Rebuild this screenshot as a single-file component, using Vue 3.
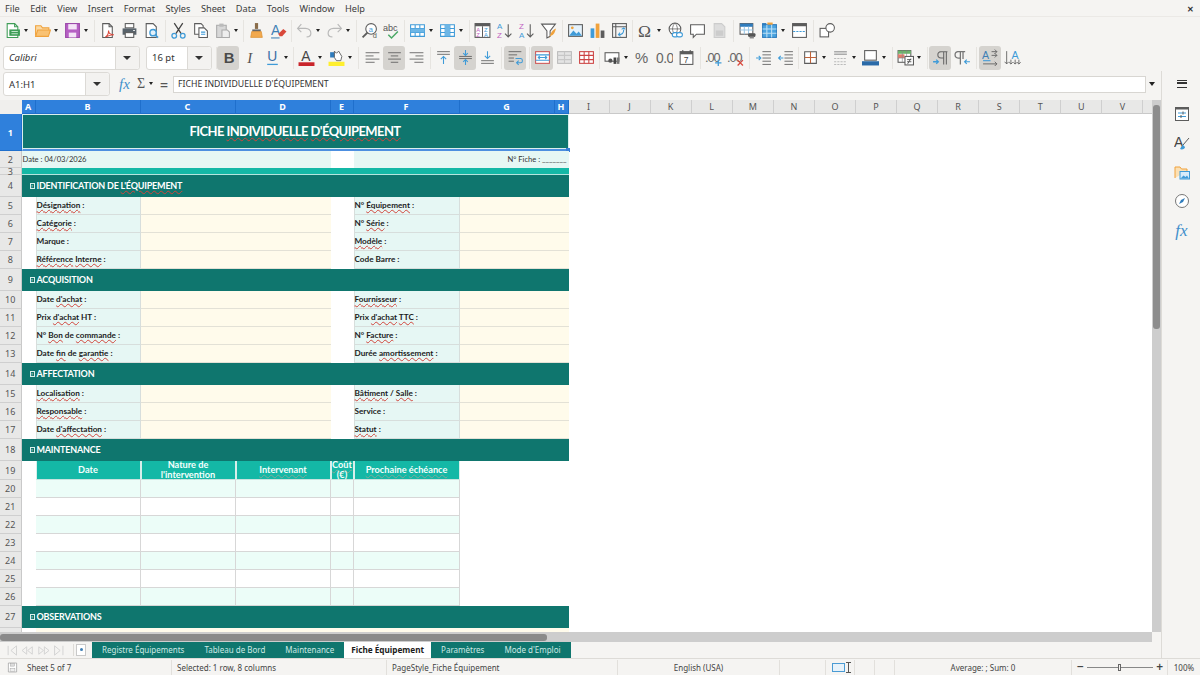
<script setup>
const B = '#3f9bd8', D = '#5c5c5c', O = '#f0a23c', R = '#d9483b', L = '#b9b9b9'
const gridLines = (c = B) => `<path d="M1.5 2.5h13v11h-13zM1.5 6.2h13M1.5 9.8h13M5.8 2.5v11M10.2 2.5v11" fill="#fff" stroke="${c}"/>`

const icons = {
  new: `<path d="M3 1.5h7l3 3v10H3z" fill="#fff" stroke="#3f9d57"/><path d="M10 1.5v3h3" fill="none" stroke="#3f9d57"/><rect x="5" y="7" width="10" height="6" fill="#3f9d57"/><path d="M7 9h6M7 11h6" stroke="#bfe5c9"/>`,
  open: `<path d="M1.5 13V3.5h5l1.5 2h6V8" fill="#fbd9a3" stroke="${O}"/><path d="M1.5 13.5l2-6h12l-2 6z" fill="#f9c273" stroke="${O}"/>`,
  save: `<path d="M1.5 1.5h13v13h-13z" fill="#b65fc4" stroke="#9d4bab"/><rect x="4" y="2" width="8" height="5" fill="#f4e4f7"/><rect x="4.5" y="10" width="7" height="4.5" fill="#f4e4f7"/>`,
  pdf: `<path d="M3.5 1.5h6l3 3v10h-9z" fill="#fff" stroke="${D}"/><path d="M9.5 1.5v3h3" fill="none" stroke="${D}"/><path d="M6 14c2-1 3-4 3-6 0 3 2 4 5 4-3 0-5 1-8 2z" fill="none" stroke="${R}"/>`,
  print: `<rect x="4" y="1.5" width="8" height="4" fill="#fff" stroke="${D}"/><path d="M1.5 6h13v6h-13z" fill="#59636b"/><rect x="4" y="10" width="8" height="4.5" fill="#fff" stroke="${D}"/><path d="M11.5 8h1.5" stroke="#fff"/>`,
  preview: `<path d="M3 1.5h6.5l3 3v10H3z" fill="#fff" stroke="${D}"/><circle cx="9.5" cy="10" r="3" fill="#e3f1fa" stroke="${B}" stroke-width="1.3"/><path d="M11.7 12.2l2.5 2.5" stroke="${B}" stroke-width="1.5"/>`,
  cut: `<path d="M4 1l6.5 10M12 1L5.5 11" stroke="#444" stroke-width="1.2" fill="none"/><circle cx="4" cy="13" r="2.2" fill="none" stroke="${B}" stroke-width="1.2"/><circle cx="12" cy="13" r="2.2" fill="none" stroke="${B}" stroke-width="1.2"/>`,
  copy: `<path d="M2.5 1.5h6l2 2v8h-8z" fill="#fff" stroke="${D}"/><path d="M6.5 5.5h5l3 3v6h-8z" fill="#fff" stroke="${D}"/><path d="M8.5 9.5h4M8.5 11.5h4" stroke="${B}"/>`,
  paste: `<path d="M2.5 3h9v11.5h-9z" fill="#d8d8d8" stroke="#aaa"/><rect x="5" y="1.5" width="4" height="3" fill="#bbb"/><path d="M7.5 7.5h5l2 2v5h-7z" fill="#eee" stroke="#aaa"/>`,
  clone: `<rect x="6.5" y="1" width="3" height="5.5" fill="#8a6d4a"/><path d="M4 7h8v2H4z" fill="#666"/><path d="M3.5 9h9l1 5.5h-11z" fill="#f2a94e" stroke="#d98a2b" stroke-width=".6"/>`,
  clear: `<text x="1" y="12" font-family="Liberation Sans" font-size="13" fill="#3f7fb5">A</text><path d="M8 11l4.5-4.5 3 2.5-4 4.5H9z" fill="${R}"/><path d="M1 15h8" stroke="#3f7fb5"/>`,
  undo: `<path d="M5 2L1.5 6 5 9.5M2 6h7c3 0 5 2 5 4.5S12 14 10 14" fill="none" stroke="${L}" stroke-width="1.1"/>`,
  redo: `<path d="M11 2l3.5 4L11 9.5M14 6H7C4 6 2 8 2 10.5S4 14 6 14" fill="none" stroke="${L}" stroke-width="1.1"/>`,
  find: `<circle cx="9.5" cy="6.5" r="5" fill="#fff" stroke="${D}"/><path d="M6 10L1.5 14.5" stroke="${D}" stroke-width="1.8"/><text x="7.2" y="9" font-family="Liberation Sans" font-size="7" fill="${B}">a</text><text x="11" y="15.5" font-family="Liberation Sans" font-size="7" fill="${D}">d</text>`,
  spell: `<text x="0" y="8" font-family="Liberation Sans" font-size="8.5" fill="#555">abc</text><path d="M5 12l3 3 6-6" fill="none" stroke="#49a865" stroke-width="1.4"/>`,
  row: gridLines() + `<rect x="1.5" y="6.2" width="13" height="3.6" fill="#6db6e6"/>`,
  col: gridLines() + `<rect x="5.8" y="2.5" width="4.4" height="11" fill="#6db6e6"/>`,
  sort: `<rect x="1" y="1.5" width="14" height="13" fill="#fff" stroke="${D}"/><rect x="1" y="1.5" width="14" height="2.5" fill="${D}"/><path d="M8 4v10" stroke="${D}"/><text x="2" y="9" font-family="Liberation Sans" font-size="5.5" fill="#c15fc1">A</text><text x="2" y="14" font-family="Liberation Sans" font-size="5.5" fill="#c15fc1">Z</text><text x="9.5" y="9" font-family="Liberation Sans" font-size="5.5" fill="${B}">Z</text><text x="9.5" y="14" font-family="Liberation Sans" font-size="5.5" fill="${B}">A</text>`,
  asc: `<text x="1" y="7" font-family="Liberation Sans" font-size="7.5" fill="${B}">A</text><text x="1" y="15" font-family="Liberation Sans" font-size="7.5" fill="#c15fc1">Z</text><path d="M11.5 2v12M8.5 11l3 3 3-3" fill="none" stroke="${D}"/>`,
  desc: `<text x="1" y="7" font-family="Liberation Sans" font-size="7.5" fill="#c15fc1">Z</text><text x="1" y="15" font-family="Liberation Sans" font-size="7.5" fill="${B}">A</text><path d="M11.5 2v12M8.5 11l3 3 3-3" fill="none" stroke="${D}"/>`,
  filter: `<path d="M1.5 2h13L9.5 8.5v5l-3 1.5V8.5z" fill="#fff" stroke="${D}"/><path d="M9 15c.5-4 2-7 6-9-1 4-2 6-5 7z" fill="${O}"/>`,
  image: `<rect x="1.5" y="2.5" width="13" height="11" fill="#e5f2fb" stroke="${D}"/><circle cx="5" cy="5.5" r="1.3" fill="${O}"/><path d="M2 13l4-5 3 3 2-2 3 4z" fill="${B}"/>`,
  chart: `<rect x="1.5" y="6" width="3.5" height="9" fill="${B}"/><rect x="6.3" y="1.5" width="3.5" height="13.5" fill="${O}"/><rect x="11" y="8" width="3.5" height="7" fill="${D}"/>`,
  pivot: `<rect x="1.5" y="1.5" width="13" height="13" fill="#f4f4f4" stroke="${D}"/><path d="M1.5 4.5h13M4.5 1.5v13" stroke="${D}"/><path d="M7 12c3 0 5-2 5-5M10 7l2-1.5L13.5 7M8.5 10L7 12l2 1.5" fill="none" stroke="${B}"/>`,
  omega: `<text x="1" y="14" font-family="Liberation Serif" font-size="16.5" fill="#555">Ω</text>`,
  link: `<circle cx="7.5" cy="6.5" r="5.5" fill="#fff" stroke="${D}"/><path d="M2 6.5h11M7.5 1c-3 3-3 8 0 11M7.5 1c3 3 3 8 0 11" fill="none" stroke="${D}" stroke-width=".7"/><rect x="5" y="10" width="5.5" height="4" rx="2" fill="#fff" stroke="${B}"/><rect x="9" y="10" width="5.5" height="4" rx="2" fill="#fff" stroke="${B}"/>`,
  comment: `<path d="M1.5 2.5h13v9H7l-3 3v-3H1.5z" fill="#fff" stroke="${D}"/>`,
  headers: `<path d="M3 1.5h7l3 3v10H3z" fill="#ddd" stroke="#ccc"/><rect x="4.5" y="8" width="7" height="5" fill="#ccc"/>`,
  range: `<rect x="1" y="1.5" width="12" height="10" fill="#fff" stroke="${D}"/><rect x="1" y="1.5" width="12" height="3" fill="#2f7cbd"/><path d="M1 7.5h12M5 4.5v7M9 4.5v7" stroke="#9cc7e6"/><rect x="8.5" y="10.5" width="7" height="3.5" rx="1" fill="#555"/><rect x="10" y="13.5" width="4" height="2" fill="#888"/>`,
  freeze: `<rect x="1.5" y="2.5" width="13" height="12" fill="#4aa3df" stroke="#2f7cbd"/><path d="M1.5 6.5h13M1.5 10.5h13M5.5 2.5v12M10 2.5v12" stroke="#bcdff5"/><rect x="1" y="1" width="4" height="2" fill="#2f7cbd"/><rect x="6" y="0.5" width="5" height="2" fill="${O}"/>`,
  split: `<rect x="1.5" y="1.5" width="13" height="13" fill="#fff" stroke="${D}"/><rect x="1.5" y="1.5" width="13" height="2.5" fill="${D}"/><path d="M2 9h12" stroke="${B}" stroke-dasharray="2 1"/>`,
  shape: `<rect x="1" y="6" width="8" height="8" fill="#fff" stroke="${D}"/><circle cx="10.5" cy="5.5" r="4" fill="#fff" stroke="${D}"/>`,
  bold: `<text x="3.5" y="13" font-family="Liberation Sans" font-weight="700" font-size="14" fill="#4a4a4a">B</text>`,
  italic: `<text x="5" y="13" font-family="Liberation Serif" font-style="italic" font-size="14" fill="#555">I</text>`,
  under: `<text x="3" y="11.5" font-family="Liberation Sans" font-size="13" fill="#3b6ea5">U</text><path d="M3 14.5h10" stroke="${B}" stroke-width="1.2"/>`,
  color: `<text x="3" y="11.5" font-family="Liberation Sans" font-size="13" fill="#444">A</text><rect x="0.5" y="12.5" width="15" height="3.5" fill="#c9252b"/>`,
  hilite: `<path d="M2 3h5v5H2z" fill="#2f7cbd"/><path d="M6 8V2l2 2 2-2 3 5-1 4H8z" fill="#fff" stroke="#555" stroke-width=".8"/><rect x="0.5" y="12" width="15" height="4" fill="#ffef2e"/>`,
  left: `<path d="M1.5 3.5h13M1.5 6.5H9M1.5 9.5h13M1.5 12.5H10" stroke="${D}" stroke-width=".8"/>`,
  center: `<path d="M2 3.5h12M4.5 6.5h7M2 9.5h12M4.5 12.5h7" stroke="${D}" stroke-width=".8"/>`,
  right: `<path d="M1.5 3.5h13M7 6.5h7.5M1.5 9.5h13M6 12.5h8.5" stroke="${D}" stroke-width=".8"/>`,
  top: `<path d="M2 2.5h12M2 5h12" stroke="${D}" stroke-width=".8"/><path d="M8 14V7M5.5 9.5L8 7l2.5 2.5" fill="none" stroke="${B}"/>`,
  mid: `<path d="M2 7h12M2 9h12" stroke="${D}" stroke-width=".8"/><path d="M8 1v5M5.8 3.8L8 6l2.2-2.2M8 15v-5M5.8 12.2L8 10l2.2 2.2" fill="none" stroke="${B}"/>`,
  bot: `<path d="M2 11h12M2 13.5h12" stroke="${D}" stroke-width=".8"/><path d="M8 2v7M5.5 6.5L8 9l2.5-2.5" fill="none" stroke="${B}"/>`,
  wrap: `<path d="M1.5 2.5h12M1.5 5.5h8M1.5 8.5h5M1.5 11.5h5" stroke="${D}" stroke-width=".8"/><path d="M8 9h5c2 0 2 4 0 4H9M11 11l-2 2 2 2" fill="none" stroke="${B}"/>`,
  merge: `<rect x="1.5" y="2.5" width="13" height="11" fill="#fff" stroke="#c55"/><path d="M1.5 5.5h13M1.5 10.5h13" stroke="${B}"/><path d="M4 8h8M5.5 6.5L4 8l1.5 1.5M10.5 6.5L12 8l-1.5 1.5" fill="none" stroke="${B}"/>`,
  merge2: `<rect x="1.5" y="2.5" width="13" height="11" fill="#e4e4e4" stroke="#bbb"/><path d="M1.5 6h13M1.5 10h13M8 2.5v11" stroke="#c7c7c7"/>`,
  unmerge: `<rect x="1.5" y="2.5" width="13" height="11" fill="#fff" stroke="#c44"/><path d="M1.5 6h13M1.5 10h13M5.8 2.5v11M10.2 2.5v11" stroke="#c44"/>`,
  money: `<rect x="1" y="3.5" width="13" height="8" fill="#fff" stroke="${D}"/><circle cx="6" cy="11" r="2" fill="#555"/><rect x="9" y="8" width="2.5" height="6" fill="#444"/><rect x="12" y="8" width="2.5" height="6" fill="#777"/>`,
  percent: `<text x="1" y="13.5" font-family="Liberation Sans" font-size="14" fill="#666">%</text>`,
  number: `<text x="0" y="13.5" font-family="Liberation Sans" font-size="13" letter-spacing="-.5" fill="#666">0.0</text>`,
  date: `<rect x="2" y="2.5" width="12" height="12" fill="#fff" stroke="${D}"/><rect x="2" y="2.5" width="12" height="2.5" fill="${D}"/><path d="M4.5 1v2M11.5 1v2" stroke="${D}"/><text x="5.5" y="13" font-family="Liberation Sans" font-size="8" fill="#444">7</text>`,
  adddec: `<text x="0" y="12" font-family="Liberation Sans" font-size="12" letter-spacing="-1" fill="#666">.00</text><path d="M12.5 10v6M9.5 13h6" stroke="${B}" stroke-width="1.2"/>`,
  deldec: `<text x="0" y="12" font-family="Liberation Sans" font-size="12" letter-spacing="-1" fill="#666">.00</text><path d="M10 10.5l5 5M15 10.5l-5 5" stroke="${R}" stroke-width="1.2"/>`,
  indent: `<path d="M7 2.5h8M7 5.5h8M7 8.5h8M7 11.5h8M7 14.5h8" stroke="${D}" stroke-width=".8"/><path d="M1 8.5h4.5M3.5 6.5l2 2-2 2" fill="none" stroke="${B}"/>`,
  outdent: `<path d="M7 2.5h8M7 5.5h8M7 8.5h8M7 11.5h8M7 14.5h8" stroke="${D}" stroke-width=".8"/><path d="M6 8.5H1.5M3.5 6.5l-2 2 2 2" fill="none" stroke="${B}"/>`,
  border: `<path d="M2.5 2.5h11v11h-11z" fill="#fff" stroke="${D}"/><path d="M8 2.5v11M2.5 8h11" stroke="#c0633a"/>`,
  bstyle: `<path d="M2 2.5h12M2 5h12" stroke="#aaa" stroke-width="1.4"/><path d="M2 9h12M2 12h12M2 14.5h12" stroke="#bbb" stroke-dasharray="2 1"/>`,
  bcolor: `<rect x="2.5" y="1.5" width="11" height="9" fill="#fff" stroke="${D}"/><path d="M0 11.5h16v4H0z" fill="#2a6aa8"/>`,
  cond: `<rect x="1" y="1.5" width="12" height="11" fill="#fff" stroke="${D}"/><rect x="1" y="1.5" width="12" height="3" fill="#6cb56c"/><rect x="1" y="5" width="6" height="3.5" fill="#e27a6a"/><path d="M1 8.5h12M5 1.5v11M9 1.5v11" stroke="#888" stroke-width=".6"/><rect x="7.5" y="7" width="8" height="8" fill="#fff" stroke="${D}"/><path d="M9.5 10h4M9.5 12h4M10 14l3-5" stroke="#444" stroke-width=".8"/>`,
  ltr: `<path d="M11 2.5v12M13.5 2.5v12M7 2.5h7.5M11 2.5H8.5a3 3 0 0 0 0 6H11" fill="none" stroke="#666"/><path d="M1 12h5M4 10l2 2-2 2" fill="none" stroke="${B}" stroke-width="1.2"/>`,
  rtl: `<path d="M6 2.5v12M3 2.5h7.5M6 2.5H4a3 3 0 0 0 0 6h2M8.5 2.5v7" fill="none" stroke="#777" stroke-width="1.2"/><path d="M15 12h-5M12 10l-2 2 2 2" fill="none" stroke="${B}" stroke-width="1.1"/>`,
  htext: `<text x="0" y="9" font-family="Liberation Sans" font-size="10" fill="#3f7fb5">A</text><path d="M9 2.5h5M9 6h5M12 .5l2 2-2 2M12 4l2 2-2 2M1 14h13M12 12l2 2-2 2" fill="none" stroke="${D}" stroke-width=".8"/><path d="M1 11h7" stroke="${B}"/>`,
  vtext: `<text x="7" y="9" font-family="Liberation Sans" font-size="10" fill="${B}">A</text><path d="M2.5 2v12M.5 12l2 2 2-2M6.5 10v4M4.8 12.5l1.7 1.7 1.7-1.7M10.5 10v4M8.8 12.5l1.7 1.7 1.7-1.7M14 10v4M12.3 12.5l1.7 1.7 1.7-1.7" fill="none" stroke="${D}" stroke-width=".8"/>`,
  properties: `<rect x="1.5" y="1.5" width="13" height="13" fill="#fff" stroke="${D}"/><rect x="1.5" y="1.5" width="13" height="2" fill="${D}"/><path d="M4 7h8M4 10.5h8" stroke="${B}"/><path d="M9 5.5v3M7 9v3" stroke="${D}"/>`,
  styles: `<text x="0" y="12" font-family="Liberation Sans" font-size="14" fill="#444">A</text><path d="M15 3L9 10" stroke="${D}"/><path d="M9 10c-2 1-2 3-3 4 2 1 5 0 5-2z" fill="${B}"/>`,
  gallery: `<path d="M1 14V3h5l1.5 2H13v2" fill="#fbe0b5" stroke="${O}"/><rect x="6" y="7.5" width="9.5" height="7.5" fill="#d8ecfa" stroke="${B}"/><path d="M6.5 14.5l3-3 2 1.5 1.5-1.5 2 3z" fill="${B}"/>`,
  nav: `<circle cx="8" cy="8" r="6.5" fill="#fff" stroke="#777"/><path d="M11 5L9 9 5 11l2-4z" fill="#2f7cbd"/>`,
  save2: `<path d="M2 1.5h12v13H2z" fill="#fff" stroke="#999"/><rect x="5" y="2" width="6" height="4" fill="#ddd" stroke="#999" stroke-width=".6"/><rect x="4.5" y="9" width="7" height="5" fill="#eee" stroke="#999" stroke-width=".6"/>`,
}

const parse = s => s.split(' ').map(t => {
  if (t === '^') return { caret: true }
  if (t[0] === '|') return { sep: true, w: +t.slice(1) }
  const active = t.endsWith('*')
  return { icon: icons[t.replace('*', '')], active }
})

const t1 = parse('new ^ open ^ save ^ |5 pdf print preview |5 cut copy paste ^ |4 clone clear |4 undo ^ redo ^ |5 find spell |4 row ^ col ^ |5 sort asc desc filter |5 image chart pivot |4 omega ^ link comment headers |6 range freeze ^ split |6 shape')
const t2 = parse('|3 bold* italic under ^ |4 color ^ hilite ^ |6 left center* right |5 top mid* bot |6 wrap* |5 merge* merge2 unmerge |4 money ^ percent number date |5 adddec deldec |6 indent outdent |3 border ^ bstyle ^ bcolor ^ |5 cond ^ |5 ltr* rtl |6 htext* vtext')

const menus = ['File', 'Edit', 'View', 'Insert', 'Format', 'Styles', 'Sheet', 'Data', 'Tools', 'Window', 'Help']
const sideIcons = [icons.properties, icons.styles, icons.gallery, icons.nav]

const colNames = 'A B C D E F G H I J K L M N O P Q R S T U V'.split(' ').concat('')
const colHeads = colNames.map((name, i) => ({ name, col: i + 2, sel: i < 8 }))
const rowHeads = Array.from({ length: 28 }, (_, i) => ({ n: i + 1, label: i < 27 ? i + 1 : '', row: i + 2, sel: i === 0 }))

const seg = t => t.split('~').map((text, i) => ({ text, bad: i % 2 === 1 }))
const cells = []
const add = (r, c, span, cls, text = '', box = false) => cells.push({ r: r + 1, c: c + 1, span, cls, parts: seg(text), box })

add(1, 1, 8, 'title', 'FICHE ~INDIVIDUELLE~ ~D\'ÉQUIPEMENT~')
add(2, 1, 4, 'info', 'Date : 04/03/2026')
add(2, 6, 3, 'info end', 'N° Fiche : _______')
add(3, 1, 8, 'band')
const section = (r, t) => add(r, 1, 8, 'section', t, true)
const form = (r, a, b) => {
  add(r, 2, 1, 'label', a)
  add(r, 3, 2, 'input')
  add(r, 6, 1, 'label', b)
  add(r, 7, 2, 'input')
}
section(4, "IDENTIFICATION DE ~L'ÉQUIPEMENT~")
form(5, '~Désignation~ :', 'N° ~Équipement~ :')
form(6, '~Catégorie~ :', 'N° ~Série~ :')
form(7, 'Marque :', '~Modèle~ :')
form(8, '~Référence~ ~Interne~ :', 'Code Barre :')
section(9, 'ACQUISITION')
form(10, "Date ~d'achat~ :", '~Fournisseur~ :')
form(11, "Prix ~d'achat~ HT :", "Prix ~d'achat~ ~TTC~ :")
form(12, 'N° ~Bon~ de ~commande~ :', 'N° ~Facture~ :')
form(13, 'Date ~fin~ de ~garantie~ :', 'Durée ~amortissement~ :')
section(14, 'AFFECTATION')
form(15, '~Localisation~ :', '~Bâtiment~ / ~Salle~ :')
form(16, '~Responsable~ :', 'Service :')
form(17, "Date ~d'affectation~ :", '~Statut~ :')
section(18, 'MAINTENANCE')
;['Date', "Nature de ~l'intervention~", '~Intervenant~', '~Coût~ (€)', '~Prochaine~ ~échéance~'].forEach((t, i) => add(19, 2 + i, 1, 'thead', t))
for (let r = 20; r <= 26; r++) for (let c = 2; c <= 6; c++) add(r, c, 1, r % 2 ? 'td' : 'td tint')
section(27, 'OBSERVATIONS')
add(28, 2, 7, 'input')

const tabs = ['Registre Équipements', 'Tableau de Bord', 'Maintenance', 'Fiche Équipement', 'Paramètres', "Mode d'Emploi"]
</script>

<template>
  <div class="app">
    <div class="menubar">
      <span v-for="m in menus" :key="m" class="menu">{{ m }}</span>
      <span class="close">✕</span>
    </div>

    <div class="toolbar">
      <template v-for="(it, i) in t1" :key="i">
        <span v-if="it.sep" class="sep" :style="{ width: it.w + 'px' }"></span>
        <span v-else-if="it.caret" class="caret"></span>
        <span v-else class="btn"><svg viewBox="0 0 16 16" v-html="it.icon"></svg></span>
      </template>
    </div>

    <div class="toolbar second">
      <div class="combo font"><span class="value italic">Calibri</span><span class="drop"></span></div>
      <div class="combo size"><span class="value">16 pt</span><span class="drop"></span></div>
      <template v-for="(it, i) in t2" :key="i">
        <span v-if="it.sep" class="sep" :style="{ width: it.w + 'px' }"></span>
        <span v-else-if="it.caret" class="caret"></span>
        <span v-else class="btn" :class="{ active: it.active }"><svg viewBox="0 0 16 16" v-html="it.icon"></svg></span>
      </template>
    </div>

    <div class="work">
      <div class="main">
        <div class="formula">
          <div class="combo name"><span class="value">A1:H1</span><span class="drop"></span></div>
          <span class="fx">fx</span>
          <span class="sigma">Σ</span>
          <span class="caret small"></span>
          <span class="equals">=</span>
          <div class="input-line">FICHE INDIVIDUELLE D'ÉQUIPEMENT</div>
          <span class="caret expand"></span>
        </div>

        <div class="sheet-row">
          <div class="sheet">
            <div class="corner"></div>
            <div v-for="h in colHeads" :key="h.col" class="col-head" :class="{ sel: h.sel }" :style="{ gridColumn: h.col }">{{ h.name }}</div>
            <div v-for="h in rowHeads" :key="h.n" class="row-head" :class="{ sel: h.sel }" :style="{ gridRow: h.row }">{{ h.label }}</div>
            <div
              v-for="(c, i) in cells"
              :key="i"
              class="cell"
              :class="c.cls"
              :style="{ gridRow: c.r, gridColumn: c.c + ' / span ' + c.span }"
            >
              <div class="content">
                <span v-if="c.box" class="tofu">?</span>
                <template v-for="(p, j) in c.parts" :key="j"><span :class="{ bad: p.bad }">{{ p.text }}</span></template>
              </div>
              <i v-if="c.cls === 'title'" class="handle"></i>
            </div>
          </div>
          <div class="vscroll"><div class="vthumb"></div></div>
        </div>

        <div class="hscroll-row">
          <div class="hscroll"><div class="hthumb"></div></div>
        </div>

        <div class="tabbar">
          <div class="tabnav">
            <svg class="navarrows" viewBox="0 0 62 14">
              <g fill="none" stroke="#d2d2d2">
                <path d="M1 2v10M10 2L4 7l6 5zM21 3l-5 4 5 4zM27 3l-5 4 5 4zM34 3l5 4-5 4zM40 3l5 4-5 4zM51 2l6 5-6 5zM60 2v10"/>
              </g>
            </svg>
            <span class="navsep"></span>
            <span class="addsheet"></span>
          </div>
          <div class="tabs">
            <span v-for="t in tabs" :key="t" class="tab" :class="{ on: t === 'Fiche Équipement' }">{{ t }}</span>
          </div>
        </div>
      </div>

      <div class="sidebar">
        <span class="hamb"></span>
        <svg v-for="(s, i) in sideIcons" :key="i" class="side-icon" viewBox="0 0 16 16" v-html="s"></svg>
        <span class="side-fx">fx</span>
      </div>
    </div>

    <div class="status">
      <div class="st st1"><svg class="disk" viewBox="0 0 16 16" v-html="icons.save2"></svg><span>Sheet 5 of 7</span></div>
      <div class="st st2">Selected: 1 row, 8 columns</div>
      <div class="st st3">PageStyle_Fiche Équipement</div>
      <div class="st st4">English (USA)</div>
      <div class="st st5"></div>
      <div class="st st6"><span class="selmode"></span><span class="ibeam"></span></div>
      <div class="st st7"></div>
      <div class="st st8"></div>
      <div class="st st9">Average: ; Sum: 0</div>
      <div class="st st10">
        <span class="zm">−</span>
        <span class="slider"><i></i></span>
        <span class="zm">+</span>
      </div>
      <div class="st st11">100%</div>
    </div>
  </div>
</template>

<style>
html, body { margin: 0; padding: 0; background: #f5f4f2; }
</style>

<style scoped>
.app {
  width: 1200px;
  height: 675px;
  overflow: hidden;
  background: #f5f4f2;
  font-family: "Noto Sans", sans-serif;
  font-size: 9.5px;
  color: #3c3c3c;
  display: flex;
  flex-direction: column;
}
.menubar {
  height: 16px;
  margin-bottom: 1px;
  display: flex;
  align-items: center;
  padding-left: 5px;
  gap: 10.5px;
  position: relative;
  box-shadow: 0 1px 0 #ebe9e6;
  font-size: 9.2px;
}
.close {
  margin-left: auto;
  margin-right: 6px;
  font-size: 8px;
  font-weight: 700;
  color: #333;
}
.toolbar {
  height: 27px;
  flex: none;
  display: flex;
  align-items: center;
  padding-left: 1px;
}
.second { padding-left: 3px; }
.btn {
  width: 22px;
  height: 24px;
  flex: none;
  display: flex;
  align-items: center;
  justify-content: center;
  border-radius: 3px;
}
.btn svg { width: 17px; height: 17px; display: block; }
.btn.active { background: #d5d3cf; }
.caret {
  width: 8px;
  height: 6px;
  flex: none;
  position: relative;
}
.caret::after {
  content: "";
  position: absolute;
  left: 1px;
  top: 1px;
  border-left: 2.5px solid transparent;
  border-right: 2.5px solid transparent;
  border-top: 3px solid #222;
}
.sep { flex: none; height: 22px; position: relative; }
.sep::after {
  content: "";
  position: absolute;
  left: 50%;
  top: 0;
  width: 1px;
  height: 100%;
  background: #e6e4e0;
}
.combo {
  height: 24px;
  background: #fff;
  border: 1px solid #dcdad6;
  border-radius: 3px;
  display: flex;
  align-items: center;
  flex: none;
  box-sizing: border-box;
}
.value { flex: 1; padding-left: 5px; font-size: 9.5px; color: #333; }
.italic { font-style: italic; }
.drop {
  width: 23px;
  height: 100%;
  border-left: 1px solid #dcdad6;
  background: #f3f2f0;
  border-radius: 0 3px 3px 0;
  position: relative;
}
.drop::after {
  content: "";
  position: absolute;
  left: 7px;
  top: 9px;
  border-left: 4px solid transparent;
  border-right: 4px solid transparent;
  border-top: 4px solid #333;
}
.font { width: 137px; margin-right: 6px; }
.size { width: 66px; margin-right: 2px; }
.work { display: flex; flex: none; height: 587px; }
.main { width: 1161px; flex: none; display: flex; flex-direction: column; }
.formula {
  height: 26px;
  margin-bottom: 3px;
  padding-left: 3px;
  display: flex;
  align-items: center;
  flex: none;
}
.name { width: 107px; }
.fx {
  margin-left: 9px;
  width: 15px;
  font-family: "Liberation Serif", serif;
  font-style: italic;
  font-size: 15px;
  color: #3f8fcb;
}
.sigma { margin-left: 3px; width: 11px; font-size: 14px; color: #555; font-family: "Liberation Serif", serif; }
.equals { margin-left: 4px; width: 13px; font-size: 14px; font-weight: 600; color: #555; }
.input-line {
  width: 973px;
  height: 17px;
  box-sizing: border-box;
  background: #fff;
  border: 1px solid #d8d6d2;
  padding-left: 4px;
  font-size: 8.7px;
  line-height: 15px;
  color: #333;
}
.caret.expand { width: 10px; margin-left: 2px; }
.caret.expand::after {
  border-left-width: 3.5px;
  border-right-width: 3.5px;
  border-top-width: 4px;
}
.sheet-row { height: 532px; display: flex; flex: none; }
.sheet {
  width: 1152px;
  height: 532px;
  overflow: hidden;
  background: #fff;
  display: grid;
  grid-template-columns: 21.5px 14px 105px 95px 95px 23px 106px 95px 14px repeat(14, 41.07px) 10px;
  grid-template-rows: 14px 37px 17px 7px 22px repeat(4, 18px) 22px repeat(4, 18px) 22px repeat(3, 18px) 22px 19px repeat(7, 18px) 22px 18px;
}
.corner { grid-row: 1; grid-column: 1; background: #f0efed; }
.col-head, .row-head {
  display: flex;
  align-items: center;
  justify-content: center;
  background: #e8e8e7;
  color: #555;
  font-size: 9px;
  box-sizing: border-box;
}
.col-head { grid-row: 1; border-right: 1px solid #cfcfcf; border-bottom: 1px solid #c9c9c9; }
.row-head { grid-column: 1; border-right: 1px solid #c9c9c9; border-bottom: 1px solid #cfcfcf; }
.col-head.sel, .row-head.sel {
  background: #2f80dc;
  color: #fff;
  font-weight: 700;
  border-color: #1f6fcc;
}
.cell {
  min-width: 0;
  min-height: 0;
  box-sizing: border-box;
  font-family: Lato, "Noto Sans", sans-serif;
  position: relative;
  display: flex;
  align-items: center;
}
.content { white-space: nowrap; }
.bad {
  text-decoration: underline wavy #d2453c .6px;
  text-underline-offset: .5px;
}
.title {
  background: #0f766e;
  color: #fff;
  font-size: 13px;
  letter-spacing: -.58px;
  font-weight: 700;
  justify-content: center;
  border: 1px solid #dbeeed;
  border-bottom: 2px solid #4d8fe0;
  box-shadow: inset 0 -1px 0 #dbeeed;
  padding-bottom: 2px;
}
.handle {
  position: absolute;
  right: -2px;
  bottom: -3px;
  width: 4px;
  height: 4px;
  background: #3b7fd6;
}
.info {
  background: #e6f7f4;
  font-size: 7.6px;
  color: #333;
  padding: 0 0 2px 1px;
}
.info.end { justify-content: flex-end; padding: 0 2px 2px 0; }
.band { background: #14b8a6; border-bottom: 1px solid #b5e5de; }
.section {
  background: #0f766e;
  color: #fff;
  font-size: 9px;
  letter-spacing: -.2px;
  font-weight: 700;
  padding: 0 0 2px 8px;
}
.tofu {
  display: inline-block;
  width: 5px;
  height: 6px;
  overflow: hidden;
  box-sizing: border-box;
  border: .6px solid #d8efeb;
  font-size: 4px;
  line-height: 5px;
  text-align: center;
  margin-right: 2px;
  font-weight: 400;
  letter-spacing: 0;
  vertical-align: 0;
}
.label {
  background: #e6f7f4;
  color: #1c1c1c;
  font-weight: 700;
  font-size: 8.2px;
  padding: 0 0 1px 0;
  border-left: 1px solid #d7dedc;
  border-right: 1px solid #d7dedc;
  border-bottom: 1px solid #d7dedc;
}
.input {
  background: #fffbeb;
  border-bottom: 1px solid #e3e1d6;
}
.thead {
  background: #14b8a6;
  color: #f4fffd;
  font-weight: 700;
  font-size: 9.2px;
  line-height: 10px;
  text-align: center;
  justify-content: center;
  border-right: 1px solid #d7efeb;
  border-bottom: 1px solid #c8e4df;
  border-left: 1px solid #d7efeb;
}
.thead .content { white-space: normal; }
.thead .bad { text-decoration-color: #7fa99a; }
.td {
  background: #fff;
  border-right: 1px solid #d7d7d7;
  border-bottom: 1px solid #d7d7d7;
}
.td.tint { background: #ecfdf8; }
.vscroll {
  width: 9px;
  height: 100%;
  background: #cdcdcd;
  padding-top: 5px;
  box-sizing: border-box;
}
.vthumb { width: 7px; margin-left: 1px; height: 224px; background: #8d8d8d; border-radius: 3px; }
.hscroll-row { height: 10px; flex: none; }
.hscroll { width: 1152px; height: 10px; background: #cdcdcd; padding-top: 2px; box-sizing: border-box; }
.hthumb { width: 547px; height: 7px; background: #8a8a8a; border-radius: 3px; }
.tabbar { height: 16px; flex: none; display: flex; }
.tabnav { width: 92px; display: flex; align-items: center; position: relative; flex: none; }
.navarrows { width: 60px; height: 13px; margin-left: 6px; }
.navsep { position: absolute; left: 73px; top: 2px; width: 1px; height: 12px; background: #dddbd7; }
.addsheet {
  position: absolute;
  left: 76px;
  top: 2px;
  width: 10px;
  height: 12px;
  background: #fff;
  border: 1px solid #c9c9c9;
  box-sizing: border-box;
}
.addsheet::after {
  content: "";
  position: absolute;
  left: 3px;
  top: 3px;
  width: 3px;
  height: 3px;
  border-radius: 50%;
  background: #3f7fb5;
}
.tabs { display: flex; background: #0f766e; }
.tab {
  padding: 0 10px;
  line-height: 16px;
  font-size: 8px;
  color: #cde9e4;
  white-space: nowrap;
}
.tab.on { background: #fff; color: #1b1b1b; font-weight: 700; padding: 0 7px; font-size: 8.2px; }
.sidebar {
  width: 39px;
  flex: none;
  box-sizing: border-box;
  border-left: 1px solid #dddbd7;
  display: flex;
  flex-direction: column;
  align-items: center;
  padding-top: 9px;
  padding-left: 1px;
}
.hamb {
  width: 10px;
  height: 8px;
  border-top: 1.5px solid #333;
  border-bottom: 1.5px solid #333;
  box-sizing: border-box;
  position: relative;
  margin-bottom: 18px;
}
.hamb::after {
  content: "";
  position: absolute;
  left: 0;
  right: 0;
  top: 1.25px;
  height: 1.5px;
  background: #333;
}
.side-icon { width: 16px; height: 16px; margin-bottom: 13px; }
.side-fx {
  font-family: "Liberation Serif", serif;
  font-style: italic;
  font-size: 17px;
  line-height: 18px;
  color: #3f8fcb;
}
.status {
  height: 17px;
  flex: none;
  display: flex;
  align-items: center;
  border-top: 1px solid #dddbd7;
  box-sizing: border-box;
  font-size: 8px;
  color: #444;
}
.st {
  height: 15px;
  display: flex;
  align-items: center;
  box-sizing: border-box;
  border-right: 1px solid #e2e0dc;
  flex: none;
  white-space: nowrap;
}
.st1 { width: 172px; padding-left: 7px; gap: 9px; }
.disk { width: 11px; height: 11px; }
.st2 { width: 215px; padding-left: 5px; }
.st3 { width: 231px; padding-left: 5px; }
.st4 { width: 162px; justify-content: center; }
.st5 { width: 46px; }
.st6 { width: 29px; padding-left: 6px; gap: 1px; }
.st7 { width: 20px; }
.st8 { width: 20px; }
.st9 { width: 177px; justify-content: center; }
.st10 { width: 96px; padding-left: 5px; justify-content: space-between; padding-right: 4px; }
.st11 { width: 32px; border-right: 0; justify-content: center; }
.selmode { width: 11px; height: 7px; border: 1px solid #4a9bd4; background: #e7f2fa; flex: none; }
.ibeam {
  width: 5px;
  height: 11px;
  border-top: 1px solid #555;
  border-bottom: 1px solid #555;
  box-sizing: border-box;
  position: relative;
  flex: none;
}
.ibeam::after {
  content: "";
  position: absolute;
  left: 2px;
  top: 0;
  bottom: 0;
  width: 1px;
  background: #555;
}
.zm { font-size: 12px; line-height: 12px; font-weight: 600; color: #444; }
.slider { width: 66px; height: 1px; background: #888; position: relative; }
.slider i {
  position: absolute;
  left: 31px;
  top: -3px;
  width: 3px;
  height: 7px;
  background: #f5f4f2;
  border: 1px solid #666;
  box-sizing: border-box;
}
</style>
